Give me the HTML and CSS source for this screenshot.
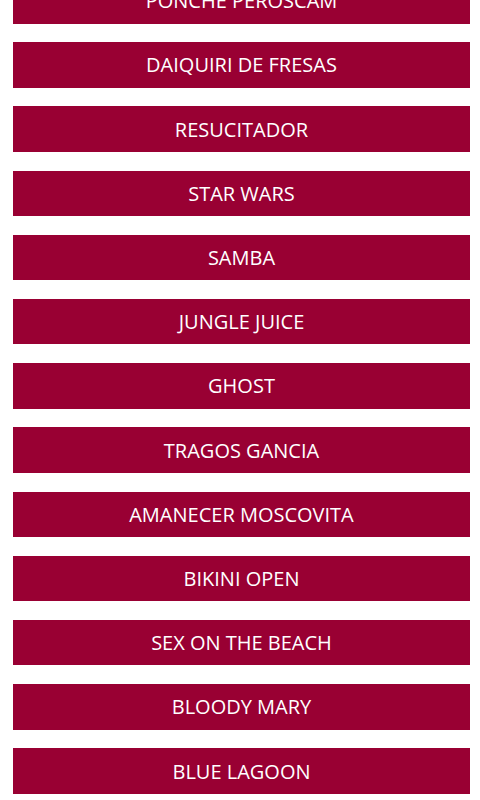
FILE: index.html
```html
<!DOCTYPE html>
<html lang="es">
<head>
    <meta charset="UTF-8">
    <meta name="viewport" content="width=device-width, initial-scale=1.0">
    <title>Cocteles</title>
    <link rel="stylesheet" href="styles.css">
</head>
<body>
    <div class="drinks">
        <a class="drink" href="#">PONCHE PEROSCAM</a>
        <a class="drink" href="#">DAIQUIRI DE FRESAS</a>
        <a class="drink" href="#">RESUCITADOR</a>
        <a class="drink" href="#">STAR WARS</a>
        <a class="drink" href="#">SAMBA</a>
        <a class="drink" href="#">JUNGLE JUICE</a>
        <a class="drink" href="#">GHOST</a>
        <a class="drink" href="#">TRAGOS GANCIA</a>
        <a class="drink" href="#">AMANECER MOSCOVITA</a>
        <a class="drink" href="#">BIKINI OPEN</a>
        <a class="drink" href="#">SEX ON THE BEACH</a>
        <a class="drink" href="#">BLOODY MARY</a>
        <a class="drink" href="#">BLUE LAGOON</a>
    </div>
</body>
</html>
```

FILE: styles.css
```css
body {
    margin: 0;
    background: #fff;
    font-family: "Open Sans", Arial, sans-serif;
    overflow: hidden;
}
.drinks {
    display: flex;
    flex-direction: column;
    gap: 18.7px;
    margin: -22px 10px 0 13px;
}
.drink {
    display: flex;
    align-items: center;
    justify-content: center;
    height: 45.5px;
    background: #990033;
    color: #fff;
    font-size: 20px;
    text-decoration: none;
}
```
